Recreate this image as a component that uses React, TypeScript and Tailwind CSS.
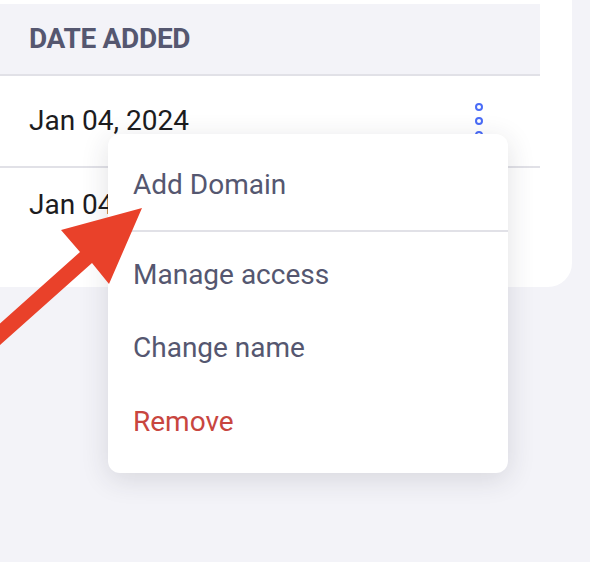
const menuItems = [
  { label: "Manage access", danger: false },
  { label: "Change name", danger: false },
  { label: "Remove", danger: true },
];

function KebabDots() {
  return (
    <div className="flex flex-col items-center gap-[6px]">
      <span className="block h-2 w-2 rounded-full border-2 border-[#4a6cf7]" />
      <span className="block h-2 w-2 rounded-full border-2 border-[#4a6cf7]" />
      <span className="block h-2 w-2 rounded-full border-2 border-[#4a6cf7]" />
    </div>
  );
}

export default function App() {
  return (
    <div
      className="relative h-[562px] w-[590px] overflow-hidden bg-[#f3f3f8]"
      style={{ fontFamily: "Roboto, 'Liberation Sans', sans-serif" }}
    >
      <div className="w-[572px] rounded-br-[24px] bg-white pt-1 pr-8 pb-[45px]">
        <div className="flex h-[72px] items-center border-b-2 border-[#e1e1e7] bg-[#f3f3f8] pl-[29px]">
          <span className="text-[28px] font-bold tracking-[-0.3px] text-[#555770]">DATE ADDED</span>
        </div>
        <div className="flex h-[92px] items-center justify-between border-b-2 border-[#e1e1e7] pr-[57px] pl-[29px]">
          <span className="text-[28px] text-[#1c1c1e]">Jan 04, 2024</span>
          <KebabDots />
        </div>
        <div className="flex h-[74px] items-center pl-[29px]">
          <span className="text-[28px] text-[#1c1c1e]">Jan 04, 2024</span>
        </div>
      </div>

      <div className="absolute top-[134px] left-[108px] w-[400px] rounded-xl bg-white pb-[14px] shadow-[0_6px_28px_rgba(40,40,60,0.14)]">
        <div className="flex h-[98px] items-center border-b-2 border-[#e1e1e7] pt-[6px] pl-[25px]">
          <span className="text-[28px] text-[#555770]">Add Domain</span>
        </div>
        <div className="pt-[6px]">
          {menuItems.map((item) => (
            <div key={item.label} className="flex h-[73.5px] items-center pl-[25px]">
              <span className={`text-[28px] ${item.danger ? "text-[#c8463f]" : "text-[#555770]"}`}>
                {item.label}
              </span>
            </div>
          ))}
        </div>
      </div>

      <svg
        className="pointer-events-none absolute top-0 left-0"
        width="590"
        height="562"
        viewBox="0 0 590 562"
      >
        <polygon
          points="142,208 109,284 92,263 -57,396 -69,385 80,252 61,230"
          fill="#e9412a"
        />
      </svg>
    </div>
  );
}
